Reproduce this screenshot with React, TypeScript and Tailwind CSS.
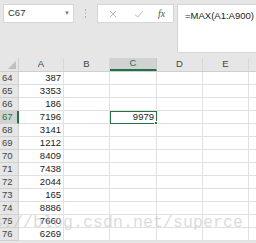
import React from "react"

const cols = ["A", "B", "C", "D", "E"]
const colW = ["w-[45px]", "w-[46px]", "w-[47px]", "w-[46px]", "w-[46px]"]
const rows: [number, string][] = [
  [64, "387"], [65, "3353"], [66, "186"], [67, "7196"], [68, "3141"], [69, "1212"], [70, "8409"],
  [71, "7438"], [72, "2044"], [73, "165"], [74, "8886"], [75, "7660"], [76, "6269"],
]

export default function App() {
  return (
    <div className="relative w-[256px] h-[243px] overflow-hidden bg-[#e6e6e6] text-[#333] font-['Liberation_Sans',Arial,sans-serif]">
      {/* formula bar */}
      <div className="flex items-start h-[58px] pt-[4px] pl-[3px]">
        <div className="flex items-center justify-between w-[71px] h-[19px] bg-white border border-[#d6d6d6] pl-[4px] pr-[3px] text-[9.5px]">
          <span>C67</span>
          <span className="text-[#777] text-[6px]">▼</span>
        </div>
        <div className="flex flex-col items-center justify-center gap-[2px] w-[23px] h-[19px]">
          <span className="w-[1.5px] h-[1.5px] bg-[#b0b0b0]" />
          <span className="w-[1.5px] h-[1.5px] bg-[#b0b0b0]" />
          <span className="w-[1.5px] h-[1.5px] bg-[#b0b0b0]" />
        </div>
        <div className="flex items-center w-[77px] h-[19px] bg-white border border-[#d6d6d6]">
          <svg width="8" height="8" viewBox="0 0 8 8" className="ml-[11px]">
            <path d="M1 1L7 7M7 1L1 7" stroke="#b5b5b5" strokeWidth="0.9" fill="none" />
          </svg>
          <svg width="10" height="8" viewBox="0 0 10 8" className="ml-[17px]">
            <path d="M1 4.5L3.8 7L9 1" stroke="#b5b5b5" strokeWidth="0.9" fill="none" />
          </svg>
          <span className="ml-[14px] text-[10px] italic font-['Liberation_Serif',serif] text-[#555]">fx</span>
        </div>
        <div className="ml-[3px] flex-1 h-[49px] bg-white border border-[#d6d6d6] border-r-0 pl-[7px] pt-[4px] text-[9.5px] text-[#222]">
          =MAX(A1:A900)
        </div>
      </div>

      {/* sheet */}
      <div className="flex flex-col text-[9.5px]">
        <div className="flex h-[14px] bg-[#e6e6e6] border-b border-[#cfcfcf]">
          <div className="relative w-[19px] border-r border-[#d0d0d0]">
            <svg width="8" height="8" viewBox="0 0 8 8" className="absolute right-[2px] bottom-[2px]">
              <path d="M8 0L8 8L0 8Z" fill="#c0c0c0" />
            </svg>
          </div>
          {cols.map((c, i) => (
            <div
              key={c}
              className={
                c === "C"
                  ? `${colW[i]} flex items-center justify-center bg-[#d2d2d2] text-[#217346] border-b-2 border-[#217346] border-r border-r-[#c8c8c8]`
                  : `${colW[i]} flex items-center justify-center text-[#444] border-r border-[#d8d8d8]`
              }
            >
              {c}
            </div>
          ))}
          <div className="flex-1" />
        </div>
        {rows.map(([n, v]) => (
          <div key={n} className="flex h-[13px] bg-white">
            <div
              className={
                n === 67
                  ? "w-[19px] flex items-center pl-[2px] bg-[#d2d2d2] text-[#217346] border-r-2 border-[#217346] border-b border-b-[#d0d0d0]"
                  : "w-[19px] flex items-center pl-[2px] bg-[#e6e6e6] text-[#444] border-r border-b border-[#d0d0d0]"
              }
            >
              {n}
            </div>
            <div className="w-[45px] flex items-center justify-end pr-[2px] border-r border-b border-[#e1e1e1] text-[#222]">{v}</div>
            <div className="w-[46px] border-r border-b border-[#e1e1e1]" />
            {n === 67 ? (
              <div className="relative w-[47px] flex items-center justify-end pr-[2px] border border-[#217346] text-[#222]">
                9979
                <span className="absolute -right-[2px] -bottom-[2px] w-[4px] h-[4px] bg-[#217346] border border-white" />
              </div>
            ) : (
              <div className="w-[47px] border-r border-b border-[#e1e1e1]" />
            )}
            <div className="w-[46px] border-r border-b border-[#e1e1e1]" />
            <div className="w-[46px] border-r border-b border-[#e1e1e1]" />
            <div className="flex-1 border-b border-[#e1e1e1]" />
          </div>
        ))}
      </div>

      {/* watermark */}
      <div className="pointer-events-none absolute left-[-47px] top-[211px] whitespace-nowrap text-[16.5px] tracking-[0.1px] text-[#c4c4c4]/60 font-['Liberation_Mono',monospace]">
        https://blog.csdn.net/superce
      </div>
    </div>
  )
}
